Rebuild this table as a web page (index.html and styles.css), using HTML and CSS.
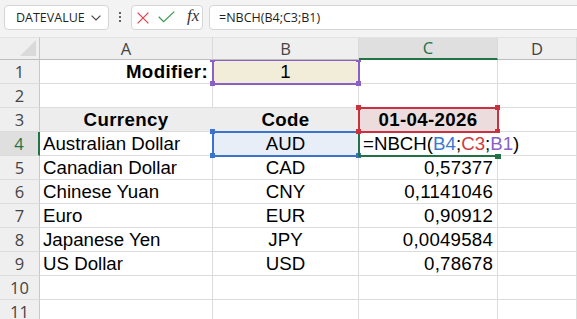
FILE: index.html
```html
<!DOCTYPE html>
<html lang="en">
<head>
<meta charset="utf-8">
<title>Sheet</title>
<link rel="stylesheet" href="styles.css">
</head>
<body>
<div class="app">
  <div class="toolbar">
    <div class="namebox">
      <span class="nb-text">DATEVALUE</span>
      <svg class="chev" width="10" height="6" viewBox="0 0 10 6"><polyline points="0.6,0.6 5,5 9.4,0.6" fill="none" stroke="#444" stroke-width="1.2"/></svg>
    </div>
    <div class="kebab"><i></i><i></i><i></i></div>
    <div class="fxbox">
      <svg class="ic-x" width="12" height="12" viewBox="0 0 12 12"><path d="M0.6 0.6 L11.4 11.4 M11.4 0.6 L0.6 11.4" stroke="#e3474c" stroke-width="1.3" fill="none"/></svg>
      <svg class="ic-ok" width="17" height="12" viewBox="0 0 17 12"><polyline points="0.7,5.8 5.6,10.6 16.3,0.6" fill="none" stroke="#3c9a52" stroke-width="1.3"/></svg>
      <span class="fx">fx</span>
    </div>
    <div class="formula">=NBCH(B4;C3;B1)</div>
  </div>

  <div class="sheet">
    <div class="corner"><span class="tri"></span></div>
    <div class="ch">A</div>
    <div class="ch">B</div>
    <div class="ch ch-on">C</div>
    <div class="ch">D</div>

    <div class="rh">1</div>
    <div class="c b rt">Modifier:</div>
    <div class="c ctr fill-beige">1<span class="ref purple"><i class="h tl"></i><i class="h tr"></i><i class="h bl"></i><i class="h br"></i></span></div>
    <div class="c"></div>
    <div class="c"></div>

    <div class="rh">2</div>
    <div class="c"></div><div class="c"></div><div class="c"></div><div class="c"></div>

    <div class="rh">3</div>
    <div class="c b ctr fill-gray">Currency</div>
    <div class="c b ctr fill-gray">Code</div>
    <div class="c b ctr fill-pink">01-04-2026<span class="ref red"><i class="h tl"></i><i class="h tr"></i><i class="h bl"></i><i class="h br"></i></span></div>
    <div class="c"></div>

    <div class="rh rh-on">4</div>
    <div class="c">Australian Dollar</div>
    <div class="c ctr fill-blue">AUD<span class="ref blue"><i class="h tl"></i><i class="h tr"></i><i class="h bl"></i><i class="h br"></i></span></div>
    <div class="c edit"><span class="ref green"><i class="h br"></i></span><span class="etext">=NBCH(<span class="k-blue">B4</span>;<span class="k-red">C3</span>;<span class="k-purple">B1</span>)</span></div>
    <div class="c"></div>

    <div class="rh">5</div>
    <div class="c">Canadian Dollar</div>
    <div class="c ctr">CAD</div>
    <div class="c rt num">0,57377</div>
    <div class="c"></div>

    <div class="rh">6</div>
    <div class="c">Chinese Yuan</div>
    <div class="c ctr">CNY</div>
    <div class="c rt num">0,1141046</div>
    <div class="c"></div>

    <div class="rh">7</div>
    <div class="c">Euro</div>
    <div class="c ctr">EUR</div>
    <div class="c rt num">0,90912</div>
    <div class="c"></div>

    <div class="rh">8</div>
    <div class="c">Japanese Yen</div>
    <div class="c ctr">JPY</div>
    <div class="c rt num">0,0049584</div>
    <div class="c"></div>

    <div class="rh">9</div>
    <div class="c">US Dollar</div>
    <div class="c ctr">USD</div>
    <div class="c rt num">0,78678</div>
    <div class="c"></div>

    <div class="rh">10</div>
    <div class="c"></div><div class="c"></div><div class="c"></div><div class="c"></div>

    <div class="rh">11</div>
    <div class="c"></div><div class="c"></div><div class="c"></div><div class="c"></div>
  </div>
</div>
</body>
</html>
```

FILE: styles.css
```css
* {
  box-sizing: border-box;
  margin: 0;
  padding: 0;
}

html, body {
  margin: 0;
  background: #ffffff;
}

.app {
  width: 577px;
  height: 319px;
  overflow: hidden;
  background: #ffffff;
}

/* ---------- toolbar ---------- */
.toolbar {
  height: 37px;
  background: #f3f3f3;
  display: flex;
  align-items: flex-start;
  padding: 5px 0 0 4px;
  font-family: "Open Sans", "Noto Sans", sans-serif;
  font-size: 12.5px;
  color: #1f1f1f;
}

.namebox,
.fxbox,
.formula {
  height: 25px;
  background: #ffffff;
  border: 1px solid #d6d6d6;
  border-radius: 4px;
  display: flex;
  align-items: center;
}

.namebox {
  width: 105px;
  padding: 0 7px 0 11px;
  justify-content: space-between;
}

.nb-text {
  line-height: 23px;
}

.chev {
  display: block;
  margin-top: 1px;
}

.kebab {
  width: 22px;
  height: 25px;
  display: flex;
  flex-direction: column;
  align-items: center;
  justify-content: center;
  gap: 2px;
  padding-bottom: 1px;
}

.kebab i {
  display: block;
  width: 2px;
  height: 2px;
  background: #333;
  border-radius: 1px;
}

.fxbox {
  width: 72px;
  padding-left: 5px;
}

.ic-x {
  display: block;
}

.ic-ok {
  display: block;
  margin-left: 9px;
  margin-top: -2px;
}

.fx {
  margin-left: 12px;
  font-family: "Liberation Serif", "DejaVu Serif", serif;
  font-style: italic;
  font-size: 17px;
  color: #333;
  line-height: 20px;
  margin-top: -3px;
}

.formula {
  flex: 1;
  margin-left: 6px;
  margin-right: -12px;
  padding-left: 9px;
  line-height: 23px;
}

/* ---------- sheet ---------- */
.sheet {
  display: grid;
  grid-template-columns: 40px 173px 146px 139px 1fr;
  grid-template-rows: 23px repeat(11, 24px);
  height: 282px;
  overflow: hidden;
}

.corner,
.ch,
.rh {
  position: relative;
  z-index: 5;
  background: #efefef;
  font-family: "Open Sans", "Noto Sans", sans-serif;
  color: #444;
}

.corner {
  border-right: 1px solid #c8c8c8;
  border-bottom: 1px solid #bdbdbd;
  border-top: 1px solid #e2e2e2;
}

.tri {
  position: absolute;
  right: 3px;
  bottom: 3px;
  width: 0;
  height: 0;
  border-left: 16px solid transparent;
  border-bottom: 16px solid #dadada;
}

.ch {
  border-top: 1px solid #e2e2e2;
  border-right: 1px solid #d9d9d9;
  border-bottom: 1px solid #bdbdbd;
  text-align: center;
  font-size: 16.5px;
  line-height: 21px;
}

.ch-on {
  background: #dfdfdf;
  color: #1e7145;
  border-bottom: 2px solid #217346;
  line-height: 20px;
}

.rh {
  border-right: 1px solid #c8c8c8;
  border-bottom: 1px solid #dcdcdc;
  text-align: center;
  font-size: 16.5px;
  line-height: 23px;
}

.rh-on {
  background: #dfdfdf;
  color: #1e7145;
  border-right: 2px solid #217346;
}

.c {
  position: relative;
  border-right: 1px solid #dcdcdc;
  border-bottom: 1px solid #dcdcdc;
  font-family: "Liberation Sans", Arial, sans-serif;
  font-size: 18.7px;
  line-height: 23px;
  padding: 0 3px;
  white-space: nowrap;
  color: #000;
}

.b { font-weight: bold; letter-spacing: 0.35px; }
.ctr { text-align: center; }
.rt { text-align: right; padding-right: 4px; }
.num { letter-spacing: 0.2px; }

.fill-beige { background: #f2edd8; }
.fill-gray { background: #ededed; border-right-color: #ededed; }
.fill-pink { background: #ecdcdd; }
.fill-blue { background: #e8eef8; }

.edit {
  padding-left: 4px;
}

.etext {
  position: relative;
  z-index: 4;
  background: #ffffff;
  padding-right: 1px;
}

.k-blue { color: #3b78d4; }
.k-red { color: #cf3b3e; }
.k-purple { color: #8a5fc6; }

/* reference highlight overlays */
.ref {
  position: absolute;
  left: -1px;
  top: -1px;
  right: -2px;
  bottom: -2px;
  border: 2px solid;
  z-index: 2;
}

.ref.purple { border-color: #8a5fc6; }
.ref.red { border-color: #c9313f; z-index: 3; }
.ref.blue { border-color: #3b73cc; }
.ref.green { border-color: #217346; }

.h {
  position: absolute;
  width: 5px;
  height: 5px;
}

.purple .h { background: #8a5fc6; }
.red .h { background: #c9313f; }
.blue .h { background: #3b73cc; }
.green .h { background: #217346; width: 6px; height: 6px; }

.h.tl { left: -4px; top: -4px; }
.h.tr { right: -3px; top: -4px; }
.h.bl { left: -4px; bottom: -3px; }
.h.br { right: -3px; bottom: -3px; }
.green .h.br { right: -4px; bottom: -4px; }
```
